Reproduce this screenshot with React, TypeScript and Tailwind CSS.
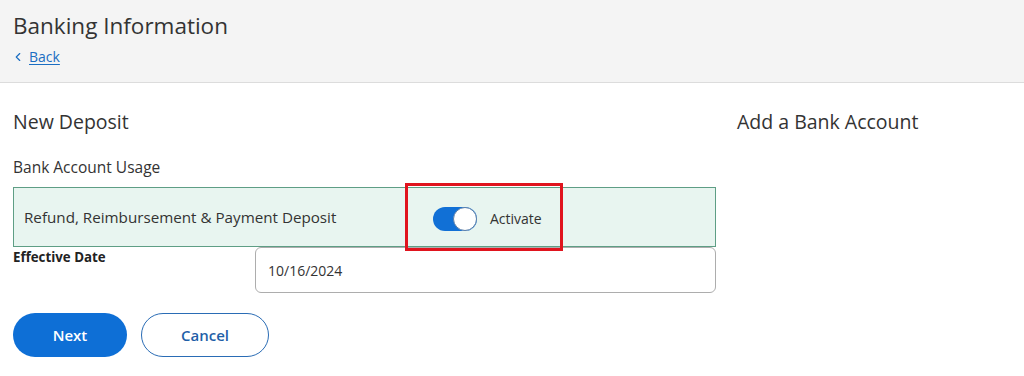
import { ChevronLeft } from 'lucide-react'

export default function App() {
  return (
    <div className="w-[1024px] h-[376px] bg-white text-[#333] font-['Open_Sans',sans-serif] overflow-hidden">
      <header className="h-[83px] bg-[#f4f4f4] border-b border-[#dcdcdc] px-[13px] pt-[10px]">
        <h1 className="text-[22.5px] leading-[32px] text-[#333]">Banking Information</h1>
        <a href="#" className="mt-[4px] flex items-center gap-[4px] text-[14px] text-[#1b6ec2]">
          <ChevronLeft size={14} strokeWidth={2} className="-ml-[2px]" />
          <span className="underline underline-offset-2">Back</span>
        </a>
      </header>

      <main className="flex gap-[21px] px-[13px] pt-[26px]">
        <section className="w-[703px]">
          <h2 className="text-[19.5px] leading-[26px]">New Deposit</h2>
          <p className="mt-[22px] text-[15.5px] leading-[20px]">Bank Account Usage</p>

          <div className="mt-[10px] h-[60px] flex items-center bg-[#e8f5f0] border-[1.5px] border-[#5e9e85] pl-[10px]">
            <span className="w-[409px] text-[15.2px]">Refund, Reimbursement &amp; Payment Deposit</span>
            <div className="relative flex items-center gap-[13px] mt-[3px]">
              <span className="relative w-[44px] h-[24px] rounded-full bg-[#1170d6]">
                <span className="absolute right-0 top-0 w-[24px] h-[24px] rounded-full bg-white border border-[#5c7fa8]" />
              </span>
              <span className="text-[14px]">Activate</span>
              <span className="absolute -left-[28px] -right-[21px] -top-[24px] -bottom-[20px] border-[3px] border-[#e0141e]" />
            </div>
          </div>

          <div className="flex">
            <label className="w-[242px] pt-[1px] text-[13.3px] font-bold leading-[18px] text-[#222]">Effective Date</label>
            <div className="flex-1 h-[46px] flex items-center rounded-[6px] border border-[#adadad] px-[12px] text-[14px]">
              10/16/2024
            </div>
          </div>

          <div className="mt-[20px] flex gap-[14px]">
            <button className="w-[114px] h-[44px] rounded-full bg-[#0e6fd6] text-white text-[15px] font-semibold">Next</button>
            <button className="w-[128px] h-[44px] rounded-full border border-[#2a6cb5] text-[#1f5fa8] text-[15px] font-semibold">Cancel</button>
          </div>
        </section>

        <aside>
          <h2 className="text-[19.5px] leading-[26px]">Add a Bank Account</h2>
        </aside>
      </main>
    </div>
  )
}
